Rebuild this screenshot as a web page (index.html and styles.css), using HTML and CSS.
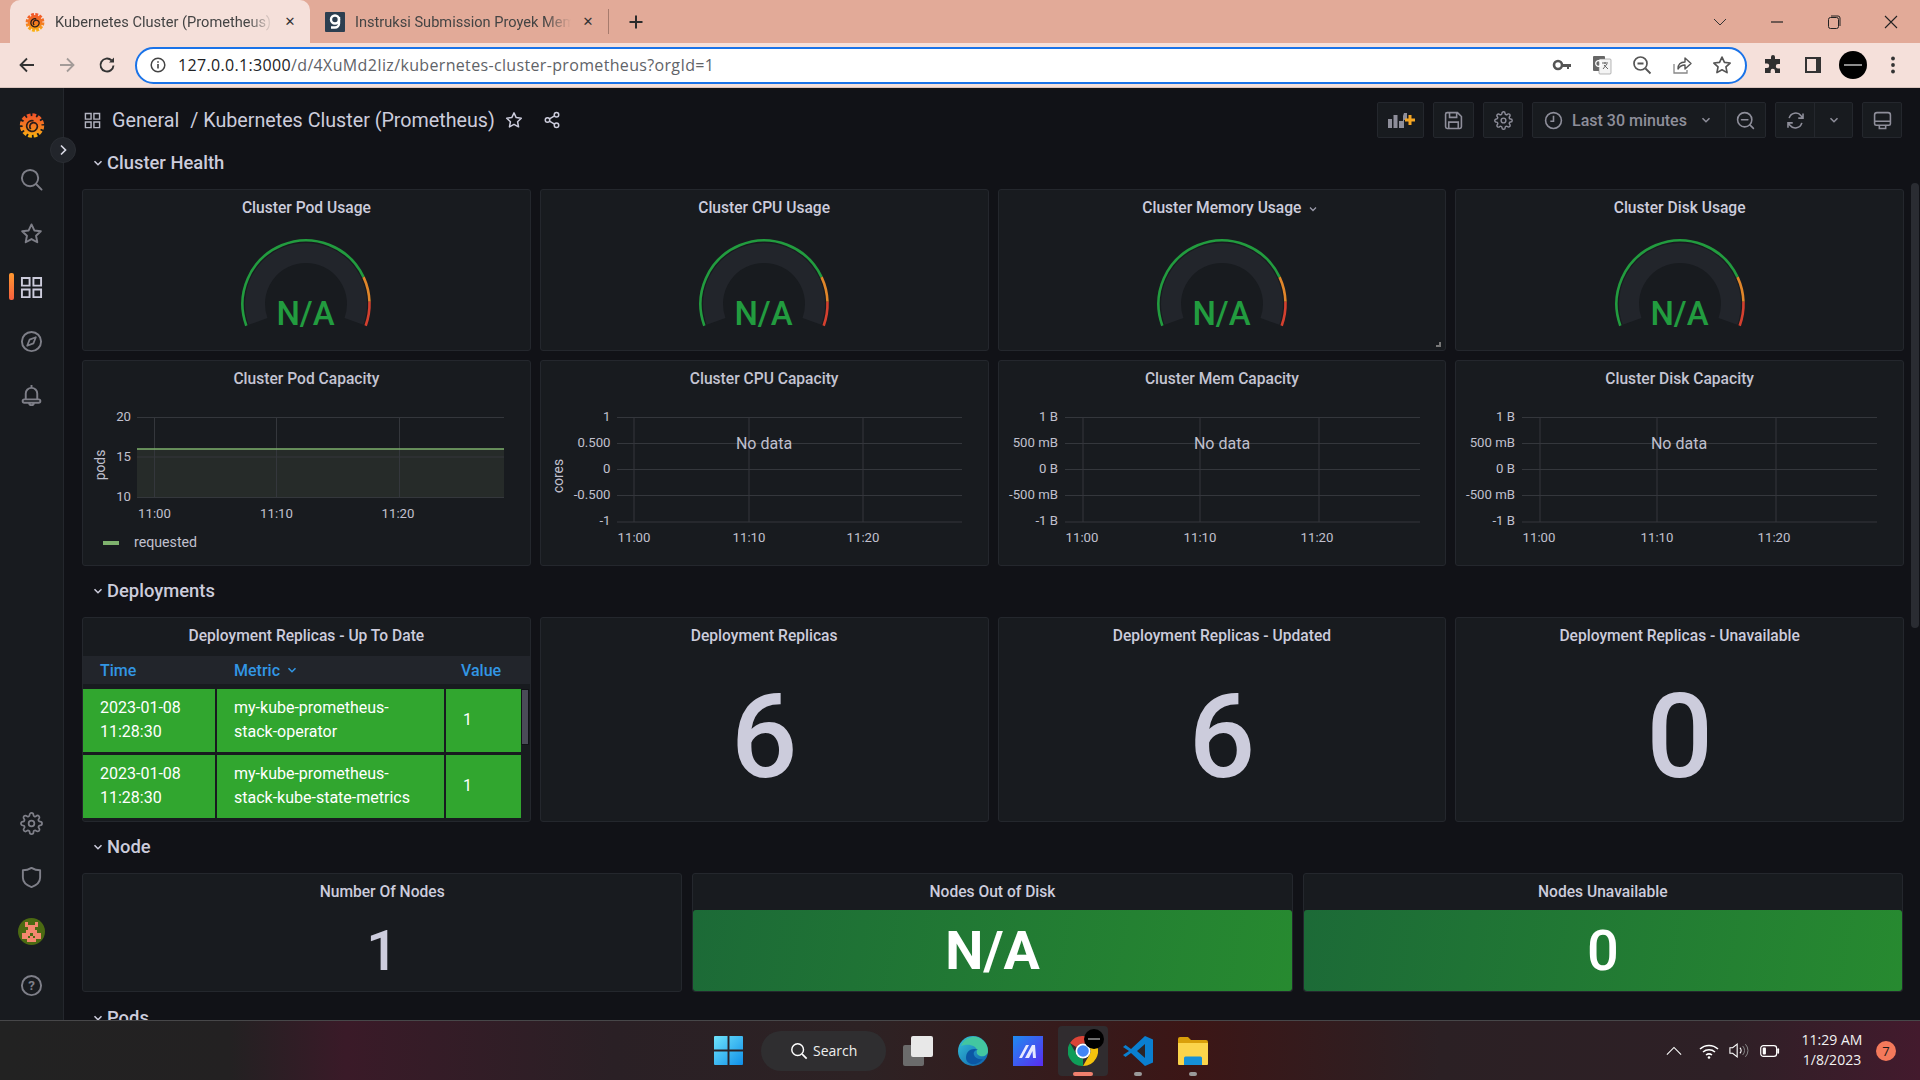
FILE: index.html
```html
<!DOCTYPE html>
<html lang="en">
<head>
    <meta charset="UTF-8">
    <title>Kubernetes Cluster (Prometheus)</title>
    <link rel="stylesheet" href="styles.css">
</head>
<body>
    <!-- shared icons -->
    <svg class="defs" width="0" height="0">
        <defs>
            <linearGradient id="gf-s" gradientUnits="userSpaceOnUse" x1="0" y1="1" x2="0" y2="25">
                <stop offset="0" stop-color="#f0502a"/>
                <stop offset=".6" stop-color="#f47f20"/>
                <stop offset="1" stop-color="#fbb40f"/>
            </linearGradient>
            <linearGradient id="win" x1="0" y1="0" x2="1" y2="1">
                <stop offset="0" stop-color="#6fe3fb"/>
                <stop offset="1" stop-color="#0f8fe8"/>
            </linearGradient>
            <linearGradient id="edge" x1="0" y1="0" x2="1" y2="1">
                <stop offset="0" stop-color="#36c3d8"/>
                <stop offset="1" stop-color="#0c5cab"/>
            </linearGradient>
            <linearGradient id="mapp" x1="0" y1="0" x2="1" y2="1">
                <stop offset="0" stop-color="#1f8cf0"/>
                <stop offset="1" stop-color="#5a2cf0"/>
            </linearGradient>
            <symbol id="i-grafana" viewBox="0 0 26 26">
                <circle cx="13" cy="13.5" r="9.5" fill="url(#gf-s)"/>
                <circle cx="13" cy="13.5" r="10.2" fill="none" stroke="url(#gf-s)" stroke-width="4" stroke-dasharray="3.6 1.75"/>
                <path d="M14.500 8.800a5.400 5.400 0 1 0 3.900 5.800 3.800 3.800 0 1 0-6.600 2.400" fill="none" stroke="#2a1c1a" stroke-width="1.700"/>
            </symbol>
            <symbol id="i-apps" viewBox="0 0 24 24">
                <path d="M2 2h8v8H2zM14 2h8v8h-8zM2 14h8v8H2zM14 14h8v8h-8z" fill="none" stroke="currentColor" stroke-width="2"/>
            </symbol>
            <symbol id="i-search" viewBox="0 0 24 24">
                <circle cx="10.500" cy="10.500" r="8.500" fill="none" stroke="currentColor" stroke-width="2"/>
                <path d="M17 17l5.500 5.500" stroke="currentColor" stroke-width="2" stroke-linecap="round"/>
            </symbol>
            <symbol id="i-star" viewBox="0 0 24 24">
                <path d="M12 2.500l2.950 6.300 6.800.850-5 4.700 1.300 6.800L12 17.800l-6.050 3.350 1.300-6.800-5-4.700 6.800-.850z" fill="none" stroke="currentColor" stroke-width="2" stroke-linejoin="round"/>
            </symbol>
            <symbol id="i-compass" viewBox="0 0 24 24">
                <circle cx="12" cy="12" r="10" fill="none" stroke="currentColor" stroke-width="2"/>
                <path d="M16.500 7.500l-2.500 6.500-6.500 2.500 2.500-6.500z" fill="none" stroke="currentColor" stroke-width="1.800" stroke-linejoin="round"/>
            </symbol>
            <symbol id="i-bell" viewBox="0 0 24 24">
                <path d="M12 1v2.500M6 16V10a6 6 0 0 1 12 0v6M4.500 16h15a1.500 1.500 0 0 1 0 3.500h-15a1.500 1.500 0 0 1 0-3.500zM9.500 19.500a2.500 2.500 0 0 0 5 0" fill="none" stroke="currentColor" stroke-width="2"/>
            </symbol>
            <symbol id="i-gear" viewBox="0 0 24 24">
                <path d="M12 15a3 3 0 1 0 0-6 3 3 0 0 0 0 6z M19.400 15a1.650 1.650 0 0 0 .33 1.820l.06.06a2 2 0 0 1 0 2.830 2 2 0 0 1-2.830 0l-.06-.06a1.650 1.650 0 0 0-1.820-.33 1.650 1.650 0 0 0-1 1.510V21a2 2 0 0 1-2 2 2 2 0 0 1-2-2v-.09A1.650 1.650 0 0 0 9 19.400a1.650 1.650 0 0 0-1.820.33l-.06.06a2 2 0 0 1-2.830 0 2 2 0 0 1 0-2.830l.06-.06a1.650 1.650 0 0 0 .33-1.820 1.650 1.650 0 0 0-1.510-1H3a2 2 0 0 1-2-2 2 2 0 0 1 2-2h.09A1.650 1.650 0 0 0 4.600 9a1.650 1.650 0 0 0-.33-1.820l-.06-.06a2 2 0 0 1 0-2.830 2 2 0 0 1 2.830 0l.06.06a1.650 1.650 0 0 0 1.820.33H9a1.650 1.650 0 0 0 1-1.510V3a2 2 0 0 1 2-2 2 2 0 0 1 2 2v.09a1.650 1.650 0 0 0 1 1.510 1.650 1.650 0 0 0 1.820-.33l.06-.06a2 2 0 0 1 2.830 0 2 2 0 0 1 0 2.830l-.06.06a1.650 1.650 0 0 0-.33 1.820V9a1.650 1.650 0 0 0 1.510 1H21a2 2 0 0 1 2 2 2 2 0 0 1-2 2h-.09a1.650 1.650 0 0 0-1.510 1z" fill="none" stroke="currentColor" stroke-width="1.800"/>
            </symbol>
            <symbol id="i-shield" viewBox="0 0 24 24">
                <path d="M12 2c3 1.800 5.500 2.500 9 2.500V12c0 4.500-3.500 8-9 10-5.500-2-9-5.500-9-10V4.500C6.500 4.500 9 3.800 12 2z" fill="none" stroke="currentColor" stroke-width="2" stroke-linejoin="round"/>
            </symbol>
            <symbol id="i-zoom" viewBox="0 0 24 24">
                <circle cx="11" cy="11" r="9" fill="none" stroke="currentColor" stroke-width="2"/>
                <path d="M7 11h8M17.500 17.500L22 22" stroke="currentColor" stroke-width="2" stroke-linecap="round"/>
            </symbol>
            <symbol id="chev" viewBox="0 0 12 12">
                <path d="M3 4.500l3 3 3-3" fill="none" stroke="currentColor" stroke-width="1.300"/>
            </symbol>
            <symbol id="gauge-arcs" viewBox="0 0 140 100">
                <path d="M22.080 85.440A51 51 0 1 1 117.920 85.440" fill="none" stroke="#22252b" stroke-width="20"/>
                <path d="M10.330 89.720A63.500 63.500 0 0 1 127.550 41.160" fill="none" stroke="#229c3f" stroke-width="2.600"/>
                <path d="M127.550 41.160A63.500 63.500 0 0 1 133.460 65.780" fill="none" stroke="#e0862a" stroke-width="2.600"/>
                <path d="M133.460 65.780A63.500 63.500 0 0 1 129.670 89.720" fill="none" stroke="#d4402f" stroke-width="2.600"/>
            </symbol>
        </defs>
    </svg>

    <!-- browser chrome -->
    <header class="tabstrip">
        <div class="tab tab-active">
            <svg class="favicon" viewBox="0 0 26 26"><use href="#i-grafana"/></svg>
            <span class="tab-title">Kubernetes Cluster (Prometheus)</span>
            <span class="tab-close">✕</span>
        </div>
        <div class="tab">
            <svg class="favicon" viewBox="0 0 20 20"><rect width="20" height="20" rx="1" fill="#2c3e50"/><circle cx="10" cy="7.500" r="4" fill="none" stroke="#fff" stroke-width="2.400"/><path d="M14 5v6.500a4 4 0 0 1-4 4H6" fill="none" stroke="#fff" stroke-width="2.400"/></svg>
            <span class="tab-title">Instruksi Submission Proyek Mem</span>
            <span class="tab-close">✕</span>
        </div>
        <span class="tab-sep"></span>
        <svg class="new-tab" viewBox="0 0 16 16"><path d="M8 1.500v13M1.500 8h13" stroke="#2b2b2b" stroke-width="2"/></svg>
        <div class="window-btns">
            <svg viewBox="0 0 16 16"><path d="M2 5l6 6 6-6" fill="none" stroke="#333" stroke-width="1"/></svg>
            <svg viewBox="0 0 16 16"><path d="M2 8h12" stroke="#222" stroke-width="1.200"/></svg>
            <svg viewBox="0 0 16 16"><rect x="2.500" y="3.500" width="10" height="11" rx="2" fill="none" stroke="#222"/><path d="M5 2h7a2 2 0 0 1 2 2v8" fill="none" stroke="#222"/></svg>
            <svg viewBox="0 0 16 16"><path d="M2 2l12 12M14 2L2 14" stroke="#222" stroke-width="1.100"/></svg>
        </div>
    </header>

    <div class="toolbar">
        <div class="nav-btns">
            <svg viewBox="0 0 20 20"><path d="M17 10H4M10 3.500L3.500 10l6.500 6.500" fill="none" stroke="#333" stroke-width="1.800"/></svg>
            <svg viewBox="0 0 20 20"><path d="M3 10h13M10 3.500l6.500 6.500-6.500 6.500" fill="none" stroke="#a39b98" stroke-width="1.800"/></svg>
            <svg viewBox="0 0 20 20"><path d="M16.500 10.500a6.500 6.500 0 1 1-2-5.200" fill="none" stroke="#333" stroke-width="1.900"/><path d="M17 2.500v5h-5z" fill="#333"/></svg>
        </div>
        <div class="omnibox">
            <svg class="omni-info" viewBox="0 0 16 16"><circle cx="8" cy="8" r="6.800" fill="none" stroke="#444" stroke-width="1.500"/><path d="M8 7v4.500M8 4.300v1.400" stroke="#444" stroke-width="1.600"/></svg>
            <span class="url"><b>127.0.0.1:3000</b>/d/4XuMd2Iiz/kubernetes-cluster-prometheus?orgId=1</span>
            <div class="omni-icons">
                <svg viewBox="0 0 20 20"><circle cx="6" cy="10" r="4" fill="none" stroke="#555" stroke-width="2.600"/><path d="M10 9h9v3h-2v2h-2v-2h-5z" fill="#555"/></svg>
                <svg viewBox="0 0 20 20"><rect x="1" y="1" width="12" height="15" rx="1" fill="#666"/><rect x="7" y="4" width="12" height="15" rx="1" fill="#f4f4f4" stroke="#888" stroke-width=".6"/><path d="M10 8h6M13 7v2M11 14l4-5M12 10l4 4" stroke="#666" stroke-width="1"/><circle cx="6.500" cy="8.500" r="2.800" fill="none" stroke="#fff" stroke-width="1.200"/></svg>
                <svg viewBox="0 0 20 20"><circle cx="8.500" cy="8.500" r="6.500" fill="none" stroke="#555" stroke-width="1.700"/><path d="M5.500 8.500h6M13.500 13.500l5 5" stroke="#555" stroke-width="1.800"/></svg>
                <svg viewBox="0 0 20 20"><path d="M2 9v9h13v-3" fill="none" stroke="#888" stroke-width="1.300"/><path d="M6 14c0-5 3-7 7-7V3l6 5.500-6 5.500v-4c-3 0-5 1-7 4z" fill="none" stroke="#555" stroke-width="1.400" stroke-linejoin="round"/></svg>
                <svg viewBox="0 0 24 24"><use href="#i-star"/></svg>
            </div>
        </div>
        <div class="ext-btns">
            <svg viewBox="0 0 20 20"><path d="M8 2a2 2 0 0 1 4 0v2h5v5h-2a2.200 2.200 0 0 0 0 4.400h2V18h-5v-2a2.200 2.200 0 0 0-4.400 0v2H2v-5h2a2.200 2.200 0 0 0 0-4.400H2V4h6z" fill="#2f2f2f"/></svg>
            <svg viewBox="0 0 20 20"><rect x="2" y="2" width="16" height="16" fill="#333"/><rect x="4" y="4" width="9" height="12" fill="#f5e0da"/></svg>
            <svg class="profile" viewBox="0 0 28 28"><circle cx="14" cy="14" r="14" fill="#000"/><path d="M5 14h18" stroke="#bbb" stroke-width="1.500"/></svg>
            <svg viewBox="0 0 20 20"><circle cx="10" cy="3.500" r="1.900" fill="#333"/><circle cx="10" cy="10" r="1.900" fill="#333"/><circle cx="10" cy="16.500" r="1.900" fill="#333"/></svg>
        </div>
    </div>

    <div class="app">
        <!-- grafana side menu -->
        <nav class="sidemenu">
            <div class="side-group side-top">
                <a class="side-item"><svg class="logo" viewBox="0 0 26 26"><use href="#i-grafana"/></svg></a>
                <a class="side-item"><svg viewBox="0 0 24 24"><use href="#i-search"/></svg></a>
                <a class="side-item"><svg viewBox="0 0 24 24"><use href="#i-star"/></svg></a>
                <a class="side-item active"><svg viewBox="0 0 24 24"><use href="#i-apps"/></svg></a>
                <a class="side-item"><svg viewBox="0 0 24 24"><use href="#i-compass"/></svg></a>
                <a class="side-item"><svg viewBox="0 0 24 24"><use href="#i-bell"/></svg></a>
            </div>
            <div class="side-group side-bottom">
                <a class="side-item"><svg viewBox="0 0 24 24"><use href="#i-gear"/></svg></a>
                <a class="side-item"><svg viewBox="0 0 24 24"><use href="#i-shield"/></svg></a>
                <a class="side-item">
                    <svg class="avatar" viewBox="0 0 27 27">
                        <circle cx="13.500" cy="13.500" r="13.500" fill="#4b6a12"/>
                        <path d="M7 4h3v3h7V4h3v5h-3v3h2v3h4v6h-5v3h-9v-3H4v-6h4v-3h2V9H7zM12 15h3v3h-3zM10 20h2v-2h-2zM15 20h2v-2h-2z" fill="#f4886f" fill-rule="evenodd"/>
                    </svg>
                </a>
                <a class="side-item"><svg viewBox="0 0 24 24"><circle cx="12" cy="12" r="10" fill="none" stroke="currentColor" stroke-width="2"/><text class="help-q" x="12" y="16.500">?</text></svg></a>
            </div>
        </nav>
        <button class="side-toggle"><svg viewBox="0 0 12 12"><path d="M4 1.500L8.500 6 4 10.500" fill="none" stroke="#d8d9e5" stroke-width="1.700"/></svg></button>

        <main class="content">
            <div class="topnav">
                <svg class="crumb-icon" viewBox="0 0 24 24"><use href="#i-apps"/></svg>
                <span class="crumb">General</span>
                <span class="crumb crumb-title">/ Kubernetes Cluster (Prometheus)</span>
                <svg class="crumb-star" viewBox="0 0 24 24"><use href="#i-star"/></svg>
                <svg class="crumb-share" viewBox="0 0 24 24"><circle cx="18" cy="5" r="3" fill="none" stroke="currentColor" stroke-width="2"/><circle cx="6" cy="12" r="3" fill="none" stroke="currentColor" stroke-width="2"/><circle cx="18" cy="19" r="3" fill="none" stroke="currentColor" stroke-width="2"/><path d="M8.600 10.500l6.800-4M8.600 13.500l6.800 4" stroke="currentColor" stroke-width="2"/></svg>

                <div class="nav-tools">
                    <div class="tool tool-add">
                        <svg viewBox="0 0 28 18"><path d="M1 8h4v9H1zM6.500 4h4v13h-4zM12 10h4v7h-4zM17 2h3v7h-3v8h-1V5z" fill="#8e8e9a"/><path d="M23 4v10M18 9h10" stroke="#f5a623" stroke-width="3"/></svg>
                    </div>
                    <div class="tool tool-save">
                        <svg viewBox="0 0 24 24"><path d="M4 2h13l5 5v13a2 2 0 0 1-2 2H4a2 2 0 0 1-2-2V4a2 2 0 0 1 2-2zM7 2v6h9V2M6 22v-8h12v8" fill="none" stroke="currentColor" stroke-width="2"/></svg>
                    </div>
                    <div class="tool">
                        <svg viewBox="0 0 24 24"><use href="#i-gear"/></svg>
                    </div>
                    <div class="tool tool-range">
                        <div class="range-main">
                            <svg viewBox="0 0 24 24"><circle cx="12" cy="12" r="10" fill="none" stroke="currentColor" stroke-width="2"/><path d="M12 6v7H8" fill="none" stroke="currentColor" stroke-width="2"/></svg>
                            <span>Last 30 minutes</span>
                            <svg class="tool-chev" viewBox="0 0 12 12"><use href="#chev"/></svg>
                        </div>
                        <div class="range-side"><svg viewBox="0 0 24 24"><use href="#i-zoom"/></svg></div>
                    </div>
                    <div class="tool tool-refresh">
                        <div class="refresh-main">
                            <svg viewBox="0 0 24 24"><path d="M4 9a8.500 8.500 0 0 1 15-3l2.500 3M20 15a8.500 8.500 0 0 1-15 3l-2.500-3M21.500 3v6h-6M2.500 21v-6h6" fill="none" stroke="currentColor" stroke-width="2"/></svg>
                        </div>
                        <div class="refresh-side"><svg class="tool-chev" viewBox="0 0 12 12"><use href="#chev"/></svg></div>
                    </div>
                    <div class="tool">
                        <svg viewBox="0 0 24 24"><path d="M5 2h14a3 3 0 0 1 3 3v11a2 2 0 0 1-2 2H4a2 2 0 0 1-2-2V5a3 3 0 0 1 3-3zM2.500 13h19M8 18v4h8v-4" fill="none" stroke="currentColor" stroke-width="2"/></svg>
                    </div>
                </div>
            </div>

            <div class="section first"><svg viewBox="0 0 12 12"><use href="#chev"/></svg>Cluster Health</div>
            <div class="row row-4 gauges">
                <div class="panel"><div class="panel-title">Cluster Pod Usage</div><svg class="gauge" viewBox="0 0 140 100"><use href="#gauge-arcs"/><text x="69.500" y="88.500">N/A</text></svg></div>
                <div class="panel"><div class="panel-title">Cluster CPU Usage</div><svg class="gauge" viewBox="0 0 140 100"><use href="#gauge-arcs"/><text x="69.500" y="88.500">N/A</text></svg></div>
                <div class="panel">
                    <div class="panel-title">Cluster Memory Usage<svg class="title-chev" viewBox="0 0 12 12"><use href="#chev"/></svg></div>
                    <svg class="gauge" viewBox="0 0 140 100"><use href="#gauge-arcs"/><text x="69.500" y="88.500">N/A</text></svg>
                    <span class="resize"></span>
                </div>
                <div class="panel"><div class="panel-title">Cluster Disk Usage</div><svg class="gauge" viewBox="0 0 140 100"><use href="#gauge-arcs"/><text x="69.500" y="88.500">N/A</text></svg></div>
            </div>
            <div class="row row-4 charts">
                <div class="panel">
                    <div class="panel-title dim">Cluster Pod Capacity</div>
                    <svg class="chart" viewBox="0 0 448 165">
                        <rect class="area" x="55" y="49" width="367" height="48"/>
                        <path class="grid" d="M55 17.500h367M55 57h367M55 97.500h367M72.500 17.500v80M194.500 17.500v80M317.500 17.500v80"/>
                        <path class="series" d="M55 49h367"/>
                        <text class="y" x="49" y="21">20</text>
                        <text class="y" x="49" y="61">15</text>
                        <text class="y" x="49" y="101">10</text>
                        <text class="t" x="72.500" y="118">11:00</text>
                        <text class="t" x="194.500" y="118">11:10</text>
                        <text class="t" x="316" y="118">11:20</text>
                        <text class="unit" transform="translate(23 65) rotate(-90)">pods</text>
                        <rect class="swatch" x="21" y="141" width="16" height="4"/>
                        <text class="legend" x="52" y="147">requested</text>
                    </svg>
                </div>
                <div class="panel">
                    <div class="panel-title dim">Cluster CPU Capacity</div>
                    <svg class="chart" viewBox="0 0 448 165">
                        <path class="grid" d="M77 17.500h345M77 43.500h345M77 69.500h345M77 95.500h345M77 122h345M94 17.500V122M209 17.500V122M323 17.500V122"/>
                        <text class="y" x="70.500" y="21">1</text>
                        <text class="y" x="70.500" y="47">0.500</text>
                        <text class="y" x="70.500" y="73">0</text>
                        <text class="y" x="70.500" y="99">-0.500</text>
                        <text class="y" x="70.500" y="125">-1</text>
                        <text class="t" x="94" y="142">11:00</text>
                        <text class="t" x="209" y="142">11:10</text>
                        <text class="t" x="323" y="142">11:20</text>
                        <text class="unit" transform="translate(23 76) rotate(-90)">cores</text>
                        <text class="nodata" x="224" y="49">No data</text>
                    </svg>
                </div>
                <div class="panel">
                    <div class="panel-title dim">Cluster Mem Capacity</div>
                    <svg class="chart" viewBox="0 0 448 165">
                        <path class="grid" d="M67 17.500h355M67 43.500h355M67 69.500h355M67 95.500h355M67 122h355M85 17.500V122M202 17.500V122M321 17.500V122"/>
                        <text class="y" x="60" y="21">1 B</text>
                        <text class="y" x="60" y="47">500 mB</text>
                        <text class="y" x="60" y="73">0 B</text>
                        <text class="y" x="60" y="99">-500 mB</text>
                        <text class="y" x="60" y="125">-1 B</text>
                        <text class="t" x="84" y="142">11:00</text>
                        <text class="t" x="202" y="142">11:10</text>
                        <text class="t" x="319" y="142">11:20</text>
                        <text class="nodata" x="224" y="49">No data</text>
                    </svg>
                </div>
                <div class="panel">
                    <div class="panel-title dim">Cluster Disk Capacity</div>
                    <svg class="chart" viewBox="0 0 448 165">
                        <path class="grid" d="M67 17.500h355M67 43.500h355M67 69.500h355M67 95.500h355M67 122h355M85 17.500V122M202 17.500V122M321 17.500V122"/>
                        <text class="y" x="60" y="21">1 B</text>
                        <text class="y" x="60" y="47">500 mB</text>
                        <text class="y" x="60" y="73">0 B</text>
                        <text class="y" x="60" y="99">-500 mB</text>
                        <text class="y" x="60" y="125">-1 B</text>
                        <text class="t" x="84" y="142">11:00</text>
                        <text class="t" x="202" y="142">11:10</text>
                        <text class="t" x="319" y="142">11:20</text>
                        <text class="nodata" x="224" y="49">No data</text>
                    </svg>
                </div>
            </div>

            <div class="section"><svg viewBox="0 0 12 12"><use href="#chev"/></svg>Deployments</div>
            <div class="row row-4 stats-big">
                <div class="panel">
                    <div class="panel-title">Deployment Replicas - Up To Date</div>
                    <div class="table">
                        <div class="thead">
                            <span>Time</span>
                            <span>Metric <svg viewBox="0 0 12 12"><use href="#chev"/></svg></span>
                            <span>Value</span>
                        </div>
                        <div class="trow">
                            <div>2023-01-08 11:28:30</div>
                            <div>my-kube-prometheus-stack-operator</div>
                            <div>1</div>
                        </div>
                        <div class="trow">
                            <div>2023-01-08 11:28:30</div>
                            <div>my-kube-prometheus-stack-kube-state-metrics</div>
                            <div>1</div>
                        </div>
                        <span class="table-scroll"></span>
                    </div>
                </div>
                <div class="panel"><div class="panel-title">Deployment Replicas</div><div class="stat-value">6</div></div>
                <div class="panel"><div class="panel-title">Deployment Replicas - Updated</div><div class="stat-value">6</div></div>
                <div class="panel"><div class="panel-title">Deployment Replicas - Unavailable</div><div class="stat-value">0</div></div>
            </div>

            <div class="section node"><svg viewBox="0 0 12 12"><use href="#chev"/></svg>Node</div>
            <div class="row row-3">
                <div class="panel"><div class="panel-title">Number Of Nodes</div><div class="node-value">1</div></div>
                <div class="panel"><div class="panel-title">Nodes Out of Disk</div><div class="node-value ok na">N/A</div></div>
                <div class="panel"><div class="panel-title">Nodes Unavailable</div><div class="node-value ok">0</div></div>
            </div>

            <div class="section"><svg viewBox="0 0 12 12"><use href="#chev"/></svg>Pods</div>
            <span class="page-scroll"></span>
        </main>
    </div>

    <!-- windows taskbar -->
    <footer class="taskbar">
        <div class="task-center">
            <svg class="win" viewBox="0 0 30 30"><path d="M0 1a1 1 0 0 1 1-1h13v14H0zM16 0h13a1 1 0 0 1 1 1v13H16zM0 16h14v14H1a1 1 0 0 1-1-1zM16 16h14v13a1 1 0 0 1-1 1H16z" fill="url(#win)"/></svg>
            <div class="task-search">
                <svg viewBox="0 0 20 20"><circle cx="8.500" cy="8.500" r="6.500" fill="none" stroke="#fff" stroke-width="1.600"/><path d="M13.500 13.500l5 5" stroke="#fff" stroke-width="1.800"/></svg>
                <span>Search</span>
            </div>
            <div class="task-app app-view">
                <svg viewBox="0 0 30 30"><rect x="0" y="9" width="21" height="21" rx="2" fill="#6b6b6b"/><rect x="8" y="0" width="22" height="21" rx="2" fill="#e8e8e8"/></svg>
            </div>
            <div class="task-app">
                <svg viewBox="0 0 30 30"><circle cx="15" cy="15" r="15" fill="url(#edge)"/><path d="M3 10C6 2 14 0 19 1c7 2 11 8 11 14 0 4-4 6-8 5-3-1-4-3-3-6-1-4-8-7-16-4z" fill="#43c6a0"/><path d="M8 22c0-6 4-9 8-9 1 0 3 0 4 1-3 0-5 2-4 5s5 5 9 4c-3 4-8 6-12 5-3-1-5-3-5-6z" fill="#0b57a4"/></svg>
            </div>
            <div class="task-app">
                <svg viewBox="0 0 30 30"><rect width="30" height="30" fill="url(#mapp)"/><path d="M6 22l7-13h3l-7 13zM12 22l7-13h3l1 13h-3l-.5-7-3.500 7z" fill="#e6e8ff"/></svg>
            </div>
            <div class="task-app app-chrome">
                <svg viewBox="0 0 30 30">
                    <path d="M15 0a15 15 0 0 1 13 7.500H15a7.500 7.500 0 0 0-6.500 3.750L2 7A15 15 0 0 1 15 0z" fill="#db4437"/>
                    <path d="M28 7.500A15 15 0 0 1 15 30l6.500-11.250A7.500 7.500 0 0 0 21.500 11.250z" fill="#f4c20d"/>
                    <path d="M2 7l6.500 11.250A7.500 7.500 0 0 0 15 22.500L15 30h0A15 15 0 0 1 2 7z" fill="#0f9d58"/>
                    <circle cx="15" cy="15" r="7.500" fill="#fff"/><circle cx="15" cy="15" r="5.800" fill="#4285f4"/>
                </svg>
                <svg class="chrome-badge" viewBox="0 0 20 20"><circle cx="10" cy="10" r="10" fill="#000"/><path d="M4 10h12" stroke="#aaa" stroke-width="1.300"/></svg>
                <i class="pin pin-on"></i>
            </div>
            <div class="task-app">
                <svg viewBox="0 0 30 30"><path d="M22 0l8 3.500v23L22 30 8 17l-5.500 4L0 19l6-4-6-4 2.500-2L8 13z" fill="#0a7fd0"/><path d="M22 8l-8 7 8 7z" fill="#2b2527"/></svg>
                <i class="pin"></i>
            </div>
            <div class="task-app">
                <svg viewBox="0 0 30 30"><path d="M0 3a2 2 0 0 1 2-2h8l3 3h15a2 2 0 0 1 2 2v4H0z" fill="#d99f0a"/><path d="M0 7h30v21a1 1 0 0 1-1 1H1a1 1 0 0 1-1-1z" fill="#fbd44b"/><path d="M6 29v-7a1.500 1.500 0 0 1 1.500-1.500h15A1.500 1.500 0 0 1 24 22v7z" fill="#1590d8"/></svg>
                <i class="pin"></i>
            </div>
        </div>
        <div class="tray">
            <svg class="tray-up" viewBox="0 0 18 10"><path d="M1 9l8-8 8 8" fill="none" stroke="#fff" stroke-width="1.200"/></svg>
            <svg class="tray-wifi" viewBox="0 0 20 16"><path d="M1 6a13 13 0 0 1 18 0M4 9a9 9 0 0 1 12 0M7 12a5 5 0 0 1 6 0" fill="none" stroke="#fff" stroke-width="1.500"/><circle cx="10" cy="14.500" r="1.300" fill="#fff"/></svg>
            <svg class="tray-sound" viewBox="0 0 22 18"><path d="M1 6h3l5-4v14l-5-4H1z" fill="none" stroke="#fff" stroke-width="1.200"/><path d="M12 6a4 4 0 0 1 0 6" fill="none" stroke="#fff" stroke-width="1.200"/><path d="M15 4a7 7 0 0 1 0 10M18 2a10 10 0 0 1 0 14" fill="none" stroke="#888" stroke-width="1.100"/></svg>
            <svg class="tray-batt" viewBox="0 0 22 14"><rect x=".8" y="1" width="17.500" height="12" rx="3" fill="none" stroke="#fff" stroke-width="1.300"/><rect x="3" y="3.200" width="3.500" height="7.600" rx="1" fill="#fff"/><path d="M20 5v4" stroke="#fff" stroke-width="2" stroke-linecap="round"/></svg>
            <div class="clock"><span>11:29 AM</span><span>1/8/2023</span></div>
            <span class="notif">7</span>
        </div>
    </footer>
</body>
</html>
```

FILE: styles.css
```css
* {
    box-sizing: border-box;
}
html, body {
    margin: 0;
    height: 1080px;
    overflow: hidden;
}
body {
    display: flex;
    flex-direction: column;
    font-family: Roboto, "Liberation Sans", sans-serif;
    background-color: #111217;
    color: #ccccdc;
}
.defs {
    position: absolute;
}
svg {
    display: block;
    flex: none;
}

/* browser */
.tabstrip {
    height: 43px;
    flex: none;
    display: flex;
    align-items: flex-end;
    padding-left: 10px;
    background-color: #e2aa98;
    font-size: 14.600px;
    color: #444;
}
.tab {
    width: 300px;
    height: 43px;
    padding: 0 11px 0 15px;
    display: flex;
    align-items: center;
    gap: 8px;
}
.tab-active {
    background-color: #f5e0da;
    border-radius: 10px 10px 0 0;
}
.tab + .tab {
    width: 298px;
}
.favicon {
    width: 20px;
    height: 20px;
    margin-right: 2px;
}
.tab-title {
    flex: 1;
    min-width: 0;
    overflow: hidden;
    white-space: nowrap;
    -webkit-mask-image: linear-gradient(to right, #000 88%, transparent);
    mask-image: linear-gradient(to right, #000 88%, transparent);
}
.tab-close {
    width: 18px;
    font-family: "DejaVu Sans", sans-serif;
    font-size: 13px;
    font-weight: 700;
    text-align: center;
    color: #333;
}
.tab-sep {
    width: 1px;
    height: 25px;
    margin: 0 0 9px 0;
    background-color: #a77b6d;
}
.new-tab {
    width: 16px;
    height: 16px;
    margin: 0 0 13px 19px;
}
.window-btns {
    margin-left: auto;
    height: 43px;
    padding-right: 21px;
    display: flex;
    align-items: center;
    gap: 41px;
}
.window-btns svg {
    width: 16px;
    height: 16px;
}
.toolbar {
    height: 45px;
    flex: none;
    display: flex;
    align-items: center;
    background-color: #f5e0da;
    border-bottom: 1px solid #d9c4bd;
}
.nav-btns {
    width: 135px;
    padding-left: 17px;
    display: flex;
    gap: 20px;
}
.nav-btns svg {
    width: 20px;
    height: 20px;
}
.omnibox {
    width: 1612px;
    height: 37px;
    display: flex;
    align-items: center;
    background-color: #fff;
    border: 2.5px solid #1a73e8;
    border-radius: 19px;
    padding: 0 13px 0 13px;
}
.omni-info {
    width: 16px;
    height: 16px;
}
.url {
    margin-left: 12px;
    font-family: "Open Sans", sans-serif;
    font-size: 16px;
    letter-spacing: .34px;
    color: #5f6368;
    white-space: nowrap;
}
.url b {
    font-weight: 400;
    color: #202124;
}
.omni-icons {
    margin-left: auto;
    display: flex;
    gap: 20px;
}
.omni-icons svg {
    width: 20px;
    height: 20px;
    color: #555;
}
.ext-btns {
    margin-left: 16px;
    display: flex;
    align-items: center;
    gap: 20px;
}
.ext-btns svg {
    width: 20px;
    height: 20px;
}
.ext-btns .profile {
    width: 28px;
    height: 28px;
    margin-left: -4px;
    margin-right: -4px;
}

/* app */
.app {
    height: 932px;
    flex: none;
    display: flex;
    position: relative;
    overflow: hidden;
}
.sidemenu {
    width: 64px;
    flex: none;
    display: flex;
    flex-direction: column;
    justify-content: space-between;
    background-color: #181b1f;
    border-right: 1px solid #24272d;
}
.side-top {
    padding-top: 10px;
}
.side-bottom {
    padding-bottom: 8px;
}
.side-item {
    height: 54px;
    display: flex;
    align-items: center;
    justify-content: center;
    position: relative;
    color: #7e7f88;
}
.side-item svg {
    width: 23px;
    height: 23px;
}
.side-item .logo {
    width: 26px;
    height: 26px;
}
.side-item .avatar {
    width: 27px;
    height: 27px;
}
.side-item.active {
    color: #ccccdc;
}
.side-item.active::before {
    content: "";
    position: absolute;
    left: 9px;
    top: 13px;
    width: 5px;
    height: 27px;
    border-radius: 2px;
    background: linear-gradient(#ff9830, #f55f3e);
}
.help-q {
    font-size: 14px;
    font-weight: 700;
    text-anchor: middle;
    fill: currentColor;
}
.side-toggle {
    position: absolute;
    left: 50px;
    top: 49px;
    width: 26px;
    height: 26px;
    padding: 0;
    display: flex;
    align-items: center;
    justify-content: center;
    border: 1px solid #2a2d33;
    border-radius: 50%;
    background-color: #22252b;
}
.side-toggle svg {
    width: 12px;
    height: 12px;
}
.content {
    flex: 1;
    min-width: 0;
    padding: 0 16px 0 18px;
    display: flex;
    flex-direction: column;
}
.topnav {
    height: 36px;
    margin-top: 14px;
    flex: none;
    display: flex;
    align-items: center;
    padding-right: 2px;
}
.crumb-icon {
    width: 17px;
    height: 17px;
    margin-left: 2px;
    color: #b4b5c2;
}
.crumb {
    margin-left: 11px;
    font-size: 19.800px;
    color: #ccccdc;
}
.crumb-title {
    margin-left: 11px;
    font-size: 19.700px;
}
.crumb-star {
    width: 18px;
    height: 18px;
    margin-left: 10px;
    color: #ccccdc;
}
.crumb-share {
    width: 18px;
    height: 18px;
    margin-left: 20px;
    color: #ccccdc;
}
.nav-tools {
    margin-left: auto;
    display: flex;
    gap: 9px;
}
.tool {
    width: 40px;
    height: 36px;
    display: flex;
    align-items: center;
    justify-content: center;
    background-color: #181b1f;
    border: 1px solid #24272d;
    border-radius: 2px;
    color: #8e8e9a;
}
.tool svg {
    width: 19px;
    height: 19px;
}
.tool-add {
    width: 47px;
}
.tool-save {
    width: 41px;
}
.tool-add svg {
    width: 28px;
    height: 18px;
}
.tool-range {
    width: 234px;
    justify-content: flex-start;
}
.range-main {
    width: 193px;
    height: 100%;
    padding-left: 11px;
    display: flex;
    align-items: center;
    border-right: 1px solid #24272d;
}
.range-main span {
    margin-left: 9px;
    font-size: 16px;
    font-weight: 500;
}
.range-main .tool-chev {
    margin-left: 12px;
}
.range-side {
    flex: 1;
    display: flex;
    justify-content: center;
}
.tool svg.tool-chev {
    width: 14px;
    height: 14px;
}
.tool-refresh {
    width: 78px;
    justify-content: flex-start;
}
.refresh-main {
    width: 39px;
    height: 100%;
    display: flex;
    align-items: center;
    justify-content: center;
    border-right: 1px solid #24272d;
}
.refresh-side {
    flex: 1;
    display: flex;
    justify-content: center;
}
.section {
    height: 30px;
    margin: 11px 0;
    flex: none;
    display: flex;
    align-items: center;
    gap: 2px;
    padding: 0 0 1px 9px;
    font-size: 18.400px;
    font-weight: 500;
    color: #ccccdc;
}
.section svg {
    width: 14px;
    height: 14px;
}
.section.first {
    margin-top: 10px;
}
.section.node {
    margin-top: 10px;
}
.row {
    display: grid;
    gap: 9px;
    flex: none;
}
.row-4 {
    grid-template-columns: repeat(4, 1fr);
}
.row-3 {
    grid-template-columns: repeat(3, 1fr);
    gap: 10px;
    height: 119px;
    margin-right: 1px;
}
.gauges {
    height: 162px;
}
.charts {
    height: 205px;
    margin-top: 9px;
}
.stats-big {
    height: 205px;
}
.panel {
    position: relative;
    display: flex;
    flex-direction: column;
    min-width: 0;
    background-color: #181b1f;
    border: 1px solid #24272d;
    border-radius: 3px;
}
.panel-title {
    height: 36px;
    flex: none;
    padding-bottom: 1px;
    display: flex;
    align-items: center;
    justify-content: center;
    font-size: 15.600px;
    font-weight: 500;
    color: #ccccdc;
}
.panel-title.dim {
    color: #c4c4d2;
}
.title-chev {
    width: 12px;
    height: 12px;
    margin: 2px -18px 0 6px;
    color: #9a9aa9;
}
.resize {
    position: absolute;
    right: 4px;
    bottom: 3px;
    width: 5px;
    height: 5px;
    border-right: 2px solid #777;
    border-bottom: 2px solid #777;
}

/* gauge */
.gauge {
    width: 140px;
    height: 100px;
    margin: 10px auto 0;
}
.gauge text {
    font-size: 33px;
    font-weight: 500;
    text-anchor: middle;
    fill: #229c3f;
}

/* graphs */
.chart {
    width: 448px;
    height: 165px;
    margin: 3px 0 0 -1px;
}
.chart text {
    font-size: 13.200px;
    fill: #c0c0ce;
}
.chart .grid {
    fill: none;
    stroke: #34373c;
    stroke-width: 1;
}
.chart .area {
    fill: #262b29;
}
.chart .series {
    stroke: #7eb26d;
    stroke-width: 1.300;
}
.chart .swatch {
    fill: #7eb26d;
}
.chart .y {
    text-anchor: end;
}
.chart .t {
    text-anchor: middle;
}
.chart .unit {
    text-anchor: middle;
    font-size: 13.800px;
}
.chart .legend {
    font-size: 14.200px;
}
.chart .nodata {
    font-size: 16px;
    text-anchor: middle;
}

/* table */
.table {
    flex: 1;
    position: relative;
    margin-top: 2px;
}
.thead {
    height: 28px;
    display: grid;
    grid-template-columns: 134px 227px 1fr;
    align-items: center;
    background-color: #22252b;
    font-size: 16px;
    font-weight: 500;
    color: #3296e4;
}
.thead span {
    display: flex;
    align-items: center;
    gap: 5px;
    padding-left: 17px;
}
.thead svg {
    width: 14px;
    height: 14px;
}
.trow {
    height: 63px;
    margin-top: 3px;
    display: grid;
    grid-template-columns: 132px 227px 75px;
    gap: 2px;
    font-size: 16px;
    line-height: 24px;
    color: #fff;
}
.thead + .trow {
    margin-top: 5px;
}
.trow div {
    display: flex;
    align-items: center;
    padding: 0 25px 2px 17px;
    background-color: #31a62f;
}
.table-scroll {
    position: absolute;
    right: 1px;
    top: 33px;
    width: 8px;
    height: 56px;
    background-color: #4a4b57;
    border: 1px solid #111217;
}
.stat-value {
    flex: 1;
    display: flex;
    align-items: center;
    justify-content: center;
    font-size: 117px;
    font-weight: 500;
    line-height: 1;
    color: #ccccdc;
}
.node-value {
    flex: 1;
    display: flex;
    align-items: center;
    justify-content: center;
    font-size: 56px;
    font-weight: 500;
    line-height: 1;
    color: #ccccdc;
    border-radius: 3px;
}
.node-value.ok {
    background: linear-gradient(100deg, #1c6a37, #278a30);
    color: #fff;
}
.node-value.na {
    font-size: 54px;
    font-weight: 700;
}
.page-scroll {
    position: absolute;
    right: 1px;
    top: 95px;
    width: 8px;
    height: 445px;
    border-radius: 4px;
    background-color: #2a2c32;
}

/* taskbar */
.taskbar {
    height: 60px;
    flex: none;
    position: relative;
    display: flex;
    align-items: center;
    justify-content: center;
    border-top: 1px solid #474749;
    background: linear-gradient(90deg, #222222 0, #232122 12%, #3a1a28 18%, #2a2025 32%, #2d2224 45%, #3c1616 62%, #2b2024 75%, #2e2026 90%, #431a2d 100%);
}
.task-center {
    display: flex;
    align-items: center;
    margin-left: 12px;
}
.win {
    width: 29px;
    height: 29px;
}
.task-search {
    width: 125px;
    height: 40px;
    margin-left: 18px;
    display: flex;
    align-items: center;
    gap: 5px;
    padding-left: 29px;
    border-radius: 20px;
    background-color: #2f2e30;
    font-family: "Open Sans", sans-serif;
    font-size: 14px;
    color: #eee;
}
.task-search svg {
    width: 18px;
    height: 18px;
}
.task-app {
    position: relative;
    width: 50px;
    height: 50px;
    margin-left: 5px;
    display: flex;
    align-items: center;
    justify-content: center;
    border-radius: 4px;
}
.task-app svg {
    width: 30px;
    height: 30px;
}
.task-app.app-view {
    margin-left: 7px;
}
.task-app.app-chrome {
    background-color: #302c2f;
}
.task-app svg.chrome-badge {
    position: absolute;
    right: 4px;
    top: 3px;
    width: 20px;
    height: 20px;
}
.pin {
    position: absolute;
    left: 21px;
    bottom: 0;
    width: 8px;
    height: 4px;
    border-radius: 2px;
    background-color: #9a9a9a;
}
.pin-on {
    left: 15px;
    width: 20px;
    background-color: #f0806e;
}
.tray {
    position: absolute;
    right: 24px;
    top: 0;
    height: 100%;
    display: flex;
    align-items: center;
}
.tray-up {
    width: 16px;
    height: 10px;
}
.tray-wifi {
    width: 20px;
    height: 16px;
    margin-left: 17px;
}
.tray-sound {
    width: 20px;
    height: 17px;
    margin-left: 10px;
}
.tray-batt {
    width: 20px;
    height: 14px;
    margin-left: 11px;
}
.clock {
    width: 64px;
    margin-left: 20px;
    padding-bottom: 2px;
    display: flex;
    flex-direction: column;
    align-items: center;
    font-family: "Open Sans", sans-serif;
    font-size: 14px;
    line-height: 20px;
    color: #f2f2f2;
}
.notif {
    width: 20px;
    height: 20px;
    margin-left: 12px;
    border-radius: 50%;
    background-color: #f4795b;
    color: #1a1a1a;
    font-family: "Open Sans", sans-serif;
    font-size: 13px;
    line-height: 20px;
    text-align: center;
}
```
